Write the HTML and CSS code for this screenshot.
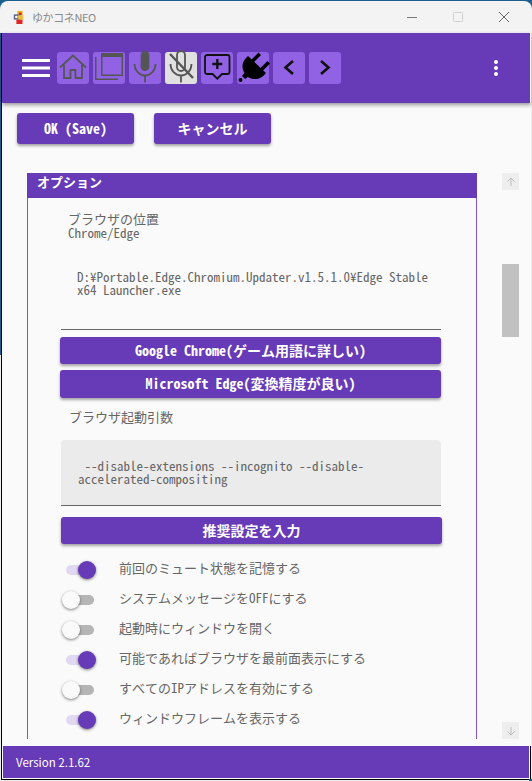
FILE: index.html
```html
<!DOCTYPE html>
<html lang="ja">
<head>
<meta charset="utf-8">
<title>ゆかコネNEO</title>
<link rel="stylesheet" href="styles.css">
</head>
<body>
<div class="window">
  <div class="titlebar">
    <svg class="app-icon" viewBox="0 0 16 16"><rect x="6" y="1" width="6" height="5" fill="#f0b020"/><rect x="8" y="3" width="3" height="3" fill="#d02020"/><rect x="2" y="5" width="7" height="6" fill="#5a6a90"/><rect x="7" y="6" width="6" height="5" fill="#e8c040"/><rect x="5" y="11" width="7" height="5" fill="#e02828"/><circle cx="5" cy="8" r="1.5" fill="#fff"/></svg>
    <span class="app-title">ゆかコネNEO</span>
    <div class="caption">
      <svg class="cap" viewBox="0 0 10 10"><path d="M0 5.500h10" stroke="#777" fill="none"/></svg>
      <svg class="cap" viewBox="0 0 10 10"><rect x=".5" y=".5" width="9" height="9" rx="1" stroke="#d0d0d0" fill="none"/></svg>
      <svg class="cap" viewBox="0 0 10 10"><path d="M0 0l10 10M10 0L0 10" stroke="#666" fill="none"/></svg>
    </div>
  </div>
  <header class="appbar">
    <svg class="burger" viewBox="0 0 28 20"><path d="M0 2.500h28M0 10h28M0 17.500h28" stroke="#fff" stroke-width="2.800" fill="none"/></svg>
    <div class="tools">
      <button class="tool"><svg viewBox="0 0 32 32" class="stroke-dim"><path d="M3 15.500L16 3.500l13 12M7 13v13h6.500v-8h5v8H25V13"/></svg></button>
      <button class="tool"><svg viewBox="0 0 32 32" class="dim"><path d="M2 5h1.500v21.500H25V28H2z"/><path fill-rule="evenodd" d="M8 1h22v23H8zM9.500 5v17.500h19V5z"/></svg></button>
      <button class="tool"><svg viewBox="0 0 32 32" class="stroke-dim"><rect class="solid" x="11.700" y="-1" width="8.600" height="20" rx="4.300"/><path d="M5.500 12a10.500 11.500 0 0 0 21 0M16 23.500v7"/></svg></button>
      <button class="tool muted"><svg viewBox="0 0 32 32" class="stroke-dim"><rect x="12" y="-1" width="8" height="20" rx="4"/><path d="M5.500 12a10.500 11.500 0 0 0 21 0M16 23.500v7"/><path class="bold" d="M5 2l23 24"/></svg></button>
      <button class="tool"><svg viewBox="0 0 32 32" class="stroke-ink"><path d="M6 3h20.500a2 2 0 0 1 2 2v15a2 2 0 0 1-2 2h-5.500l-4.700 4.700L11.600 22H6a2 2 0 0 1-2-2V5a2 2 0 0 1 2-2z"/><path class="bold" d="M16.300 7v10M11.300 12h10"/></svg></button>
      <button class="tool"><svg viewBox="0 0 32 32" class="ink"><path d="M11 4l18 17c-4 6-12 8-18 4l-3 2-3-3 2.500-3C4 15 5 9 11 4z"/><path d="M13.500 8.500l8-8 2.500 2.500-8 8zM22.500 17l8-8 2.500 2.500-8 8z"/><circle cx="3.500" cy="28" r="2"/></svg></button>
      <button class="tool"><svg viewBox="0 0 32 32" class="line"><path d="M20 9l-7.500 6.500L20 22"/></svg></button>
      <button class="tool"><svg viewBox="0 0 32 32" class="line"><path d="M12 9l7.500 6.500L12 22"/></svg></button>
    </div>
    <svg class="more" viewBox="0 0 4 16"><circle cx="2" cy="2" r="2" fill="#fff"/><circle cx="2" cy="8" r="2" fill="#fff"/><circle cx="2" cy="14" r="2" fill="#fff"/></svg>
  </header>
  <main class="content">
    <div class="actions">
      <button class="btn action">OK (Save)</button>
      <button class="btn action">キャンセル</button>
    </div>
    <div class="scroller">
      <section class="panel">
        <h2 class="panel-title">オプション</h2>
        <div class="panel-body">
          <p class="label">ブラウザの位置<br>Chrome/Edge</p>
          <div class="path">D:¥Portable.Edge.Chromium.Updater.v1.5.1.0¥Edge Stable x64 Launcher.exe</div>
          <button class="btn wide first">Google Chrome(ゲーム用語に詳しい)</button>
          <button class="btn wide second">Microsoft Edge(変換精度が良い)</button>
          <p class="label args-label">ブラウザ起動引数</p>
          <div class="args">&nbsp;--disable-extensions --incognito --disable-accelerated-compositing</div>
          <button class="btn wide third">推奨設定を入力</button>
          <ul class="toggles">
            <li class="toggle on"><span class="switch"><i class="knob"></i></span><span class="toggle-text">前回のミュート状態を記憶する</span></li>
            <li class="toggle"><span class="switch"><i class="knob"></i></span><span class="toggle-text">システムメッセージをOFFにする</span></li>
            <li class="toggle"><span class="switch"><i class="knob"></i></span><span class="toggle-text">起動時にウィンドウを開く</span></li>
            <li class="toggle on"><span class="switch"><i class="knob"></i></span><span class="toggle-text">可能であればブラウザを最前面表示にする</span></li>
            <li class="toggle"><span class="switch"><i class="knob"></i></span><span class="toggle-text">すべてのIPアドレスを有効にする</span></li>
            <li class="toggle on"><span class="switch"><i class="knob"></i></span><span class="toggle-text">ウィンドウフレームを表示する</span></li>
          </ul>
        </div>
      </section>
      <div class="scrollbar">
        <span class="sb-btn"><svg viewBox="0 0 10 10"><path d="M5 9V1M1.500 4.500L5 1l3.500 3.500" stroke="#bbb" fill="none"/></svg></span>
        <span class="sb-track"><span class="sb-thumb"></span></span>
        <span class="sb-btn"><svg viewBox="0 0 10 10"><path d="M5 1v8M1.500 5.500L5 9l3.500-3.500" stroke="#bbb" fill="none"/></svg></span>
      </div>
    </div>
  </main>
  <footer class="statusbar">Version 2.1.62</footer>
</div>
</body>
</html>
```
FILE: styles.css
```css
* { box-sizing: border-box; }
html, body { margin: 0; height: 100%; background: #1c5f8f; overflow: hidden; }
body { font-family: "Noto Sans Mono CJK JP", "Noto Sans CJK JP", monospace; color: #666; }
.window {
  width: 532px; height: 781px; display: flex; flex-direction: column; padding: 1px 1px 1px 1px;
  background:
    linear-gradient(#1c5f8f, #1c5f8f) 0 0 / 100% 9px no-repeat,
    linear-gradient(#1c5f8f, #1c5f8f) 100% 100% / 3px 2px no-repeat,
    linear-gradient(#eee, #eee) 0 100% / 100% 1px no-repeat,
    linear-gradient(#eee, #eee) 100% 0 / 1px 100% no-repeat,
    linear-gradient(#1c5f8f 355px, #eee 355px) 0 0 / 1px 100% no-repeat,
    #000;
}
.titlebar { height: 32px; flex: none; display: flex; align-items: center; background: #f3f3f3; margin: 0 -1px; border-radius: 8px 8px 0 0; padding-left: 12px; }
.app-icon { width: 14px; height: 16px; flex: none; }
.app-title { margin-left: 6px; font: 11px "Noto Sans CJK JP", sans-serif; letter-spacing: -.4px; color: #8a8a8a; }
.caption { margin-left: auto; display: flex; gap: 36px; padding-right: 23px; }
.cap { width: 10px; height: 10px; display: block; }
.appbar { flex: none; height: 70px; margin-left: 1px; background: #673ab7; display: flex; align-items: center; padding: 0 32px 0 20px; border-right: 1px solid #fafafa; box-shadow: 0 2px 4px rgba(0,0,0,.4); position: relative; z-index: 1; }
.burger { width: 28px; height: 20px; flex: none; margin-right: 7px; }
.tools { display: flex; gap: 4px; }
.tool { width: 32px; height: 32px; padding: 0; border: 0; border-radius: 3px; background: #9162e4; display: flex; align-items: center; justify-content: center; }
.tool.muted { background: #e0e0e0; }
.tool svg { width: 32px; height: 32px; display: block; overflow: visible; }
.dim { fill: #555; }
.ink { fill: #000; }
.stroke-dim { fill: none; stroke: #555; stroke-width: 1.800; }
.stroke-dim .solid { fill: #555; stroke: none; }
.stroke-dim .bold { stroke-width: 2.400; }
.stroke-ink { fill: none; stroke: #111; stroke-width: 1.800; }
.stroke-ink .bold { stroke-width: 2.300; }
.line { fill: none; stroke: #111; stroke-width: 2.600; }
.more { width: 4px; height: 16px; margin-left: auto; }
.content { flex: 1; min-height: 0; background: #fafafa; display: flex; flex-direction: column; margin-left: 1px; overflow: hidden; }
.btn { border: 0; background: #673ab7; color: #fff; font-family: inherit; font-weight: 700; border-radius: 3px; box-shadow: 0 2px 3px rgba(0,0,0,.35); padding: 0 0 2px; }
.actions { display: flex; gap: 20px; padding: 10px 0 0 15px; flex: none; }
.action { width: 117px; height: 31px; font-size: 14px; }
.scroller { flex: 1; min-height: 0; display: flex; padding: 29px 0 7px 25px; }
.panel { width: 450px; flex: none; display: flex; flex-direction: column; overflow: hidden; }
.panel-title { flex: none; height: 25px; margin: 0; padding: 0 0 0 10px; background: #673ab7; color: #fff; font-size: 13px; font-weight: 700; line-height: 18px; }
.panel-body { flex: 1; min-height: 0; border: solid #7e57c2; border-width: 0 1px; padding: 14px 35px 0 33px; overflow: hidden; }
.label { margin: 0 0 0 7px; font-size: 13px; line-height: 14px; }
.path { margin-top: 30px; padding: 0 10px 0 16px; font-size: 13px; line-height: 13px; height: 60px; color: #666; border-bottom: 1px solid #666; width: 380px; }
.wide { display: block; width: 381px; height: 27px; font-size: 14px; }
.first { margin: 7px 0 0 -1px; }
.second { margin: 6px 0 0 -1px; height: 28px; }
.args-label { margin: 12px 0 0 8px; }
.args { margin-top: 16px; width: 380px; height: 66px; background: #ebebeb; border-radius: 4px 4px 0 0; border-bottom: 1px solid #666; padding: 19px 20px 0 17px; font-size: 13px; line-height: 13px; color: #666; }
.third { margin-top: 11px; }
.toggles { list-style: none; margin: 11px 0 0; padding: 0; }
.toggle { height: 30px; display: flex; align-items: center; font-size: 13px; }
.toggle-text { padding-bottom: 6px; }
.switch { width: 28px; height: 10px; margin: 0 25px 0 5px; flex: none; position: relative; border-radius: 5px; background: #b5b5b5; }
.knob { position: absolute; top: -4px; left: -4px; width: 18px; height: 18px; border-radius: 50%; background: #fafafa; box-shadow: 0 1px 3px rgba(0,0,0,.5); }
.on .switch { background: #e1d8f1; }
.on .knob { left: 12px; background: #673ab7; }
.scrollbar { width: 17px; margin-left: 25px; flex: none; display: flex; flex-direction: column; }
.sb-btn { height: 17px; flex: none; background: #eee; display: flex; align-items: center; justify-content: center; }
.sb-btn svg { width: 10px; height: 10px; }
.sb-track { flex: 1; padding-top: 74px; }
.sb-thumb { display: block; height: 73px; background: #c1c1c1; }
.statusbar { flex: none; height: 32px; margin: 0 2px 2px 2px; background: #673ab7; box-shadow: 0 0 0 1px #fafafa; color: #fff; font: 11.500px/32px "Noto Sans CJK JP", sans-serif; padding-left: 13px; }
```
